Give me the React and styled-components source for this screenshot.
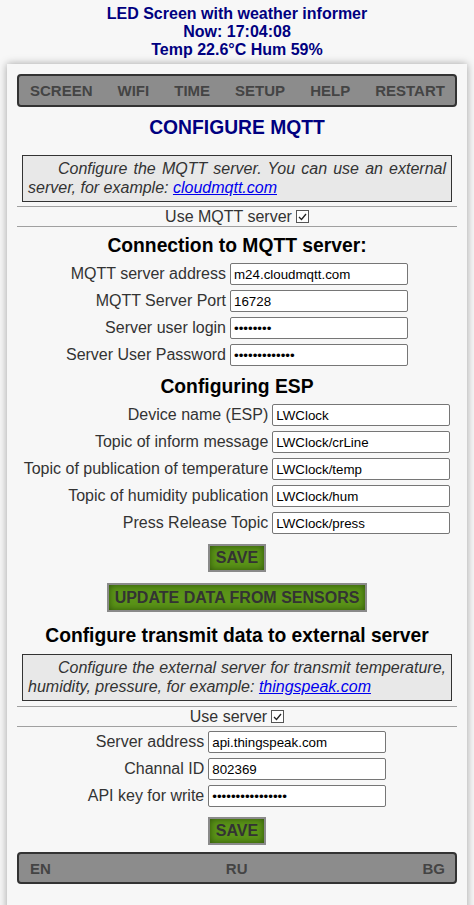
import React from "react";
import styled, { createGlobalStyle } from "styled-components";

const GlobalStyle = createGlobalStyle`
  html, body {
    margin: 0;
    padding: 0;
    background: #f7f7f7;
    font-family: "Liberation Sans", Arial, sans-serif;
    color: #333;
  }
`;

const Page = styled.div`
  width: 474px;
  height: 905px;
  overflow: hidden;
`;

const Header = styled.div`
  padding-top: 5px;
  text-align: center;
  color: #000080;
  font-weight: bold;
  font-size: 16px;
  line-height: 18px;
`;

const Panel = styled.div`
  margin: 5px 7px 0;
  padding: 10px 10px 30px;
  background: #f7f7f7;
  box-shadow: 0 0 8px rgba(0, 0, 0, 0.35);
  display: flex;
  flex-direction: column;
  align-items: center;
`;

const NavBar = styled.div`
  align-self: stretch;
  box-sizing: border-box;
  height: ${(p) => p.$height || 33}px;
  display: flex;
  align-items: center;
  justify-content: space-between;
  padding: 0 10px 0 11px;
  background: #8c8c8c;
  border: 2px solid #333;
  border-radius: 4px;
  margin-top: ${(p) => p.$top || 0}px;
`;

const NavItem = styled.a`
  color: #444;
  font-weight: bold;
  font-size: 15px;
  text-decoration: none;
`;

const Title = styled.h3`
  margin: ${(p) => (p.$top != null ? p.$top : 10)}px 0 0;
  font-size: 19.3px;
  line-height: 22px;
  color: ${(p) => (p.$navy ? "#000080" : "#000")};
  text-align: center;
`;

const InfoBox = styled.div`
  box-sizing: border-box;
  width: 430px;
  margin-top: ${(p) => p.$top}px;
  padding: 4px 5px;
  background: #e8e8e8;
  border: 1px solid #333;
  font-style: italic;
  font-size: 16px;
  line-height: 18.5px;
  text-align: justify;
  text-indent: 30px;
  color: #333;
  a {
    color: #0000ee;
  }
`;

const Rule = styled.hr`
  align-self: stretch;
  margin: ${(p) => p.$top || 0}px 0 0;
  border: 0;
  border-top: 1px solid #a0a0a0;
  height: 0;
`;

const CheckRow = styled.label`
  display: flex;
  align-items: center;
  gap: 4px;
  font-size: 16px;
  line-height: 19px;
  color: #333;
`;

const CheckBox = styled.span`
  box-sizing: border-box;
  width: 13px;
  height: 13px;
  border: 1px solid #555;
  background: #fff;
  display: inline-flex;
  align-items: center;
  justify-content: center;
`;

const FormGrid = styled.div`
  display: grid;
  grid-template-columns: auto 178px;
  column-gap: 4px;
  row-gap: 5px;
  align-items: center;
  margin-top: ${(p) => p.$top}px;
`;

const Label = styled.span`
  text-align: right;
  font-size: 16px;
  white-space: nowrap;
  color: #333;
`;

const Input = styled.input`
  box-sizing: border-box;
  width: 178px;
  height: 22px;
  margin: 0;
  padding: 1px 3px;
  border: 1px solid #767676;
  border-radius: 2px;
  background: #fff;
  font-family: "Liberation Sans", Arial, sans-serif;
  font-size: 13.33px;
  color: #000;
  outline: none;
`;

const GreenButton = styled.button`
  box-sizing: border-box;
  height: ${(p) => p.$height || 28}px;
  margin-top: ${(p) => p.$top}px;
  padding: 0 6px;
  background: #5b9418;
  border: 2px solid #8a8a8a;
  box-shadow: inset 0 0 7px #2e5208;
  color: #333;
  font-family: "Liberation Sans", Arial, sans-serif;
  font-weight: bold;
  font-size: 16px;
  cursor: pointer;
`;

const Check = () => (
  <CheckBox>
    <svg width="9" height="8" viewBox="0 0 9 8">
      <path d="M1 4 L3.5 6.5 L8 1" fill="none" stroke="#222" strokeWidth="1.3" />
    </svg>
  </CheckBox>
);

const mqttFields = [
  ["MQTT server address", "text", "m24.cloudmqtt.com"],
  ["MQTT Server Port", "text", "16728"],
  ["Server user login", "password", "12345678"],
  ["Server User Password", "password", "1234567890123"],
];

const espFields = [
  ["Device name (ESP)", "LWClock"],
  ["Topic of inform message", "LWClock/crLine"],
  ["Topic of publication of temperature", "LWClock/temp"],
  ["Topic of humidity publication", "LWClock/hum"],
  ["Press Release Topic", "LWClock/press"],
];

const extFields = [
  ["Server address", "text", "api.thingspeak.com"],
  ["Channal ID", "text", "802369"],
  ["API key for write", "password", "ABCDEFGHIJKLMNOP"],
];

const Field = ({ label, type = "text", value }) => (
  <>
    <Label>{label}</Label>
    <Input type={type} defaultValue={value} />
  </>
);

export default function App() {
  return (
    <Page>
      <GlobalStyle />
      <Header>
        <div>LED Screen with weather informer</div>
        <div>Now: 17:04:08</div>
        <div>Temp 22.6°C Hum 59%</div>
      </Header>
      <Panel>
        <NavBar>
          {["SCREEN", "WIFI", "TIME", "SETUP", "HELP", "RESTART"].map((n) => (
            <NavItem key={n} href="#">{n}</NavItem>
          ))}
        </NavBar>

        <Title $navy>CONFIGURE MQTT</Title>
        <InfoBox $top={16}>
          Configure the MQTT server. You can use an external server, for
          example: <a href="#">cloudmqtt.com</a>
        </InfoBox>
        <Rule $top={4} />
        <CheckRow>
          Use MQTT server <Check />
        </CheckRow>
        <Rule />

        <Title $top={8}>Connection to MQTT server:</Title>
        <FormGrid $top={6}>
          {mqttFields.map(([l, t, v]) => (
            <Field key={l} label={l} type={t} value={v} />
          ))}
        </FormGrid>

        <Title>Configuring ESP</Title>
        <FormGrid $top={6}>
          {espFields.map(([l, v]) => (
            <Field key={l} label={l} value={v} />
          ))}
        </FormGrid>

        <GreenButton $top={10}>SAVE</GreenButton>
        <GreenButton $top={11} $height={29}>UPDATE DATA FROM SENSORS</GreenButton>

        <Title $top={13}>Configure transmit data to external server</Title>
        <InfoBox $top={7}>
          Configure the external server for transmit temperature, humidity,
          pressure, for example: <a href="#">thingspeak.com</a>
        </InfoBox>
        <Rule $top={5} />
        <CheckRow>
          Use server <Check />
        </CheckRow>
        <Rule />
        <FormGrid $top={4}>
          {extFields.map(([l, t, v]) => (
            <Field key={l} label={l} type={t} value={v} />
          ))}
        </FormGrid>
        <GreenButton $top={10}>SAVE</GreenButton>

        <NavBar $top={7} $height={32}>
          {["EN", "RU", "BG"].map((n) => (
            <NavItem key={n} href="#">{n}</NavItem>
          ))}
        </NavBar>
      </Panel>
    </Page>
  );
}
